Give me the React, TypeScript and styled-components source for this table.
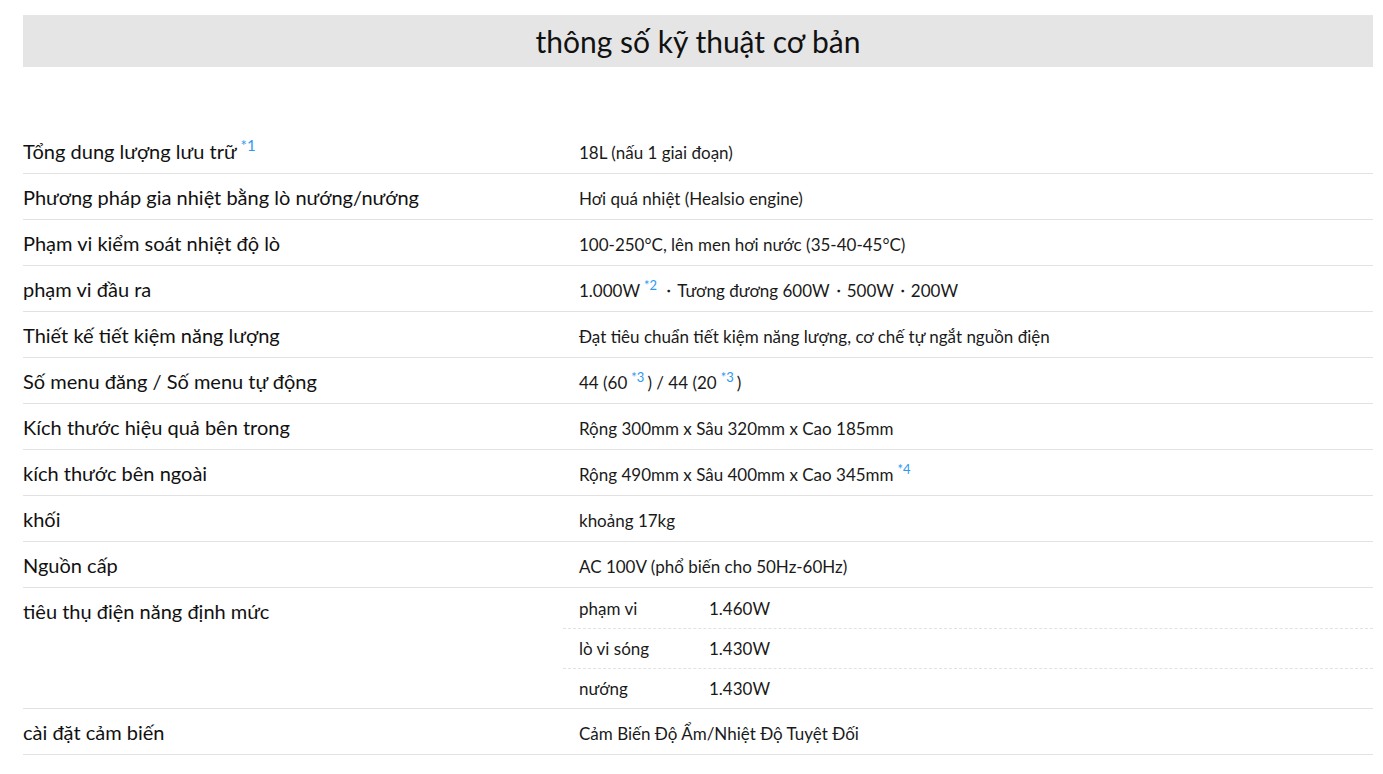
import React from 'react';
import styled, { createGlobalStyle } from 'styled-components';

const GlobalStyle = createGlobalStyle`
  body {
    margin: 0;
    background: #ffffff;
    font-family: 'Lato', 'Noto Sans', sans-serif;
    color: #1a1a1a;
  }
`;

type SubRow = { label: string; value: string };

type Spec = {
  label: string;
  labelNote?: string;
  value?: React.ReactNode;
  sub?: SubRow[];
};

const Page = styled.div`
  padding: 15px 10px 0 23px;
`;

const TitleBar = styled.h2`
  margin: 0;
  height: 52px;
  background: #e5e5e5;
  display: flex;
  align-items: center;
  justify-content: center;
  font-size: 30px;
  font-weight: 400;
  color: #111;
`;

const Table = styled.div`
  margin-top: 61px;
  display: flex;
  flex-direction: column;
`;

const Row = styled.div<{ tall?: boolean }>`
  display: grid;
  grid-template-columns: 540px 1fr;
  min-height: 45px;
  border-bottom: 1px solid #e2e2e2;
  align-items: ${(props) => (props.tall ? 'start' : 'center')};
`;

const Label = styled.div<{ tall?: boolean }>`
  font-size: 20px;
  line-height: 24px;
  color: #111;
  padding-top: ${(props) => (props.tall ? '11px' : '0')};
`;

const Value = styled.div`
  font-size: 17px;
  line-height: 20px;
  padding: 5px 0 0 16px;
  color: #1a1a1a;
`;

const Note = styled.sup<{ big?: boolean }>`
  color: #2f98ef;
  font-size: ${(props) => (props.big ? '15px' : '13px')};
  line-height: 0;
  margin: 0 3px 0 4px;
  vertical-align: ${(props) => (props.big ? '8px' : '7px')};
`;

const SubList = styled.div`
  display: flex;
  flex-direction: column;
`;

const SubItem = styled.div`
  display: grid;
  grid-template-columns: 130px 1fr;
  height: 40px;
  align-items: center;
  padding-left: 16px;
  font-size: 17px;
  & + & {
    border-top: 1px dashed #e2e2e2;
    height: 39px;
  }
`;

const specs: Spec[] = [
  { label: 'Tổng dung lượng lưu trữ', labelNote: '*1', value: '18L (nấu 1 giai đoạn)' },
  { label: 'Phương pháp gia nhiệt bằng lò nướng/nướng', value: 'Hơi quá nhiệt (Healsio engine)' },
  { label: 'Phạm vi kiểm soát nhiệt độ lò', value: '100-250°C, lên men hơi nước (35-40-45°C)' },
  {
    label: 'phạm vi đầu ra',
    value: (
      <>
        1.000W<Note>*2</Note>・Tương đương 600W・500W・200W
      </>
    ),
  },
  {
    label: 'Thiết kế tiết kiệm năng lượng',
    value: 'Đạt tiêu chuẩn tiết kiệm năng lượng, cơ chế tự ngắt nguồn điện',
  },
  {
    label: 'Số menu đăng / Số menu tự động',
    value: (
      <>
        44 (60<Note>*3</Note>) / 44 (20<Note>*3</Note>)
      </>
    ),
  },
  { label: 'Kích thước hiệu quả bên trong', value: 'Rộng 300mm x Sâu 320mm x Cao 185mm' },
  {
    label: 'kích thước bên ngoài',
    value: (
      <>
        Rộng 490mm x Sâu 400mm x Cao 345mm<Note>*4</Note>
      </>
    ),
  },
  { label: 'khối', value: 'khoảng 17kg' },
  { label: 'Nguồn cấp', value: 'AC 100V (phổ biến cho 50Hz-60Hz)' },
  {
    label: 'tiêu thụ điện năng định mức',
    sub: [
      { label: 'phạm vi', value: '1.460W' },
      { label: 'lò vi sóng', value: '1.430W' },
      { label: 'nướng', value: '1.430W' },
    ],
  },
  { label: 'cài đặt cảm biến', value: 'Cảm Biến Độ Ẩm/Nhiệt Độ Tuyệt Đối' },
];

const App: React.FC = () => (
  <>
    <GlobalStyle />
    <Page>
      <TitleBar>thông số kỹ thuật cơ bản</TitleBar>
      <Table>
        {specs.map((spec) => (
          <Row key={spec.label} tall={!!spec.sub}>
            <Label tall={!!spec.sub}>
              {spec.label}
              {spec.labelNote && <Note big>{spec.labelNote}</Note>}
            </Label>
            {spec.sub ? (
              <SubList>
                {spec.sub.map((item) => (
                  <SubItem key={item.label}>
                    <span>{item.label}</span>
                    <span>{item.value}</span>
                  </SubItem>
                ))}
              </SubList>
            ) : (
              <Value>{spec.value}</Value>
            )}
          </Row>
        ))}
      </Table>
    </Page>
  </>
);

export default App;
